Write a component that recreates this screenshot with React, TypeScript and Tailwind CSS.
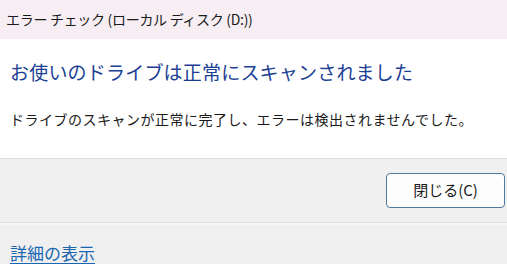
export default function App() {
  const font = { fontFamily: "'Noto Sans CJK JP', 'Noto Sans', sans-serif" };
  return (
    <div className="w-[507px] h-[264px] overflow-hidden bg-[#f0f0f0] flex flex-col" style={font}>
      <div className="h-[39px] shrink-0 bg-[#f6eef3] flex items-center pl-[6px] text-[14px] text-[#1a1a1a] tracking-[-0.3px]">
        エラー チェック (ローカル ディスク (D:))
      </div>
      <div className="h-[120px] shrink-0 bg-white border-b border-[#dedede] flex flex-col pl-[10px]">
        <div className="mt-[20px] text-[19px] leading-[26px] text-[#1c3f94] tracking-[0.2px]">
          お使いのドライブは正常にスキャンされました
        </div>
        <div className="mt-[24px] text-[14px] leading-[20px] text-[#1a1a1a] tracking-[0.5px]">
          ドライブのスキャンが正常に完了し、エラーは検出されませんでした。
        </div>
      </div>
      <div className="h-[63px] shrink-0 flex items-start justify-end pr-[2px] pt-[14px]">
        <button className="w-[119px] h-[35px] rounded-[4px] border border-[#4f7a9e] bg-[#fdfdfd] text-[15px] text-[#1a1a1a] flex items-center justify-center">
          閉じる(C)
        </button>
      </div>
      <div className="h-[3px] shrink-0 border-t border-[#e0e0e0] bg-[#f7f7f7]" />
      <div className="flex-1 pl-[10px] pt-[16px]">
        <span className="text-[17px] leading-[22px] text-[#1a66b0] underline underline-offset-[3px]">
          詳細の表示
        </span>
      </div>
    </div>
  );
}
